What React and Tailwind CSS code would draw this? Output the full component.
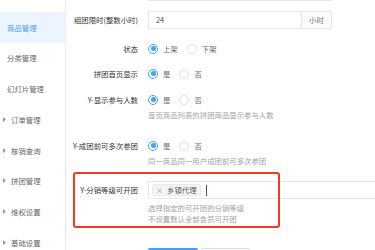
import React from "react";

const font = "font-['Noto_Sans_CJK_SC','Noto_Sans',sans-serif]";

function SideItem({ text, active, arrow }) {
  return (
    <div
      className={`h-[30.7px] flex items-center text-[7.4px] ${
        active ? "bg-[#ecf5ff] text-[#409eff] pl-[7px]" : "text-[#666] " + (arrow ? "pl-[3px]" : "pl-[7px]")
      }`}
    >
      {arrow && (
        <svg width="3" height="5" viewBox="0 0 3 5" className="mr-[5px]">
          <path d="M0 0 L3 2.5 L0 5 Z" fill="#999" />
        </svg>
      )}
      <span>{text}</span>
    </div>
  );
}

function Radio({ checked, label, first }) {
  return (
    <span className={`flex items-center ${first ? "" : "ml-[9px]"}`}>
      <span
        className={`w-[10px] h-[10px] rounded-full border flex items-center justify-center ${
          checked ? "border-[#409eff]" : "border-[#dcdfe6]"
        }`}
      >
        {checked && <span className="w-[5px] h-[5px] rounded-full bg-[#409eff]" />}
      </span>
      <span className="ml-[5px] text-[#666]">{label}</span>
    </span>
  );
}

function Label({ children }) {
  return (
    <div className="w-[82px] shrink-0 pr-[10px] h-[18px] flex items-center justify-end text-[#333] whitespace-nowrap">
      {children}
    </div>
  );
}

function Help({ children }) {
  return <div className="leading-[11px] text-[#a3a3a3] whitespace-nowrap">{children}</div>;
}

export default function App() {
  return (
    <div className={`relative w-[375px] h-[250px] overflow-hidden bg-white flex ${font}`}>
      <aside className="w-[66px] shrink-0 border-r border-[#ececec] pt-[12px]">
        <SideItem text="商品管理" active />
        <SideItem text="分类管理" />
        <SideItem text="幻灯片管理" />
        <SideItem text="订单管理" arrow />
        <SideItem text="核销查询" arrow />
        <SideItem text="拼团管理" arrow />
        <SideItem text="维权设置" arrow />
        <SideItem text="基础设置" arrow />
      </aside>
      <main className="flex-1 text-[7.4px]">
        <div className="flex mt-[-17px]">
          <Label></Label>
          <div className="w-[184px] h-[18px] border border-[#e4e7ed] flex">
            <div className="flex-1" />
            <div className="w-[24px] border-l border-[#e4e7ed] bg-[#fafafa]" />
          </div>
        </div>

        <div className="flex mt-[10px]">
          <Label>组团限时(整数小时)</Label>
          <div className="w-[184px] h-[18px] border border-[#e4e7ed] flex items-stretch">
            <div className="flex-1 flex items-center pl-[7px] text-[#555]">24</div>
            <div className="w-[30px] border-l border-[#e4e7ed] bg-[#fafafa] flex items-center justify-center text-[#777]">
              小时
            </div>
          </div>
        </div>

        <div className="flex mt-[11px]">
          <Label>状态</Label>
          <div className="h-[18px] flex items-center">
            <Radio checked label="上架" first />
            <Radio label="下架" />
          </div>
        </div>

        <div className="flex mt-[7px]">
          <Label>拼团首页显示</Label>
          <div className="h-[18px] flex items-center">
            <Radio checked label="是" first />
            <Radio label="否" />
          </div>
        </div>

        <div className="flex mt-[8px]">
          <Label>Y-显示参与人数</Label>
          <div>
            <div className="h-[18px] flex items-center">
              <Radio checked label="是" first />
              <Radio label="否" />
            </div>
            <Help>首页商品列表的拼团商品显示参与人数</Help>
          </div>
        </div>

        <div className="flex mt-[17px]">
          <Label>Y-成团前可多次参团</Label>
          <div>
            <div className="h-[18px] flex items-center">
              <Radio checked label="是" first />
              <Radio label="否" />
            </div>
            <Help>同一商品同一用户成团前可多次参团</Help>
          </div>
        </div>

        <div className="flex mt-[15px]">
          <Label>Y-分销等级可开团</Label>
          <div>
            <div className="w-[260px] h-[18px] border border-[#e4e7ed] flex items-center pl-[3px]">
              <span className="h-[12px] flex items-center px-[3px] bg-[#f4f4f5] border border-[#e9e9eb] rounded-[2px]">
                <span className="text-[#909399] text-[7px] leading-none">×</span>
                <span className="ml-[4px] text-[#555]">乡镇代理</span>
              </span>
              <span className="ml-[5px] w-px h-[11px] bg-[#555]" />
            </div>
            <div className="mt-[3px]">
              <Help>选择指定的可开团的分销等级</Help>
              <Help>不设置默认全部会员可开团</Help>
            </div>
          </div>
        </div>

        <div className="flex mt-[24px]">
          <div className="w-[82px] shrink-0" />
          <div className="w-[50px] h-[20px] bg-[#409eff] rounded-[2px]" />
          <div className="ml-[3px] w-[49px] h-[20px] border border-[#dcdfe6] rounded-[2px]" />
        </div>
      </main>
      <div className="absolute left-[73px] top-[172px] w-[207px] h-[56px] border-2 border-[#f33a21] rounded-[3px] pointer-events-none" />
    </div>
  );
}
